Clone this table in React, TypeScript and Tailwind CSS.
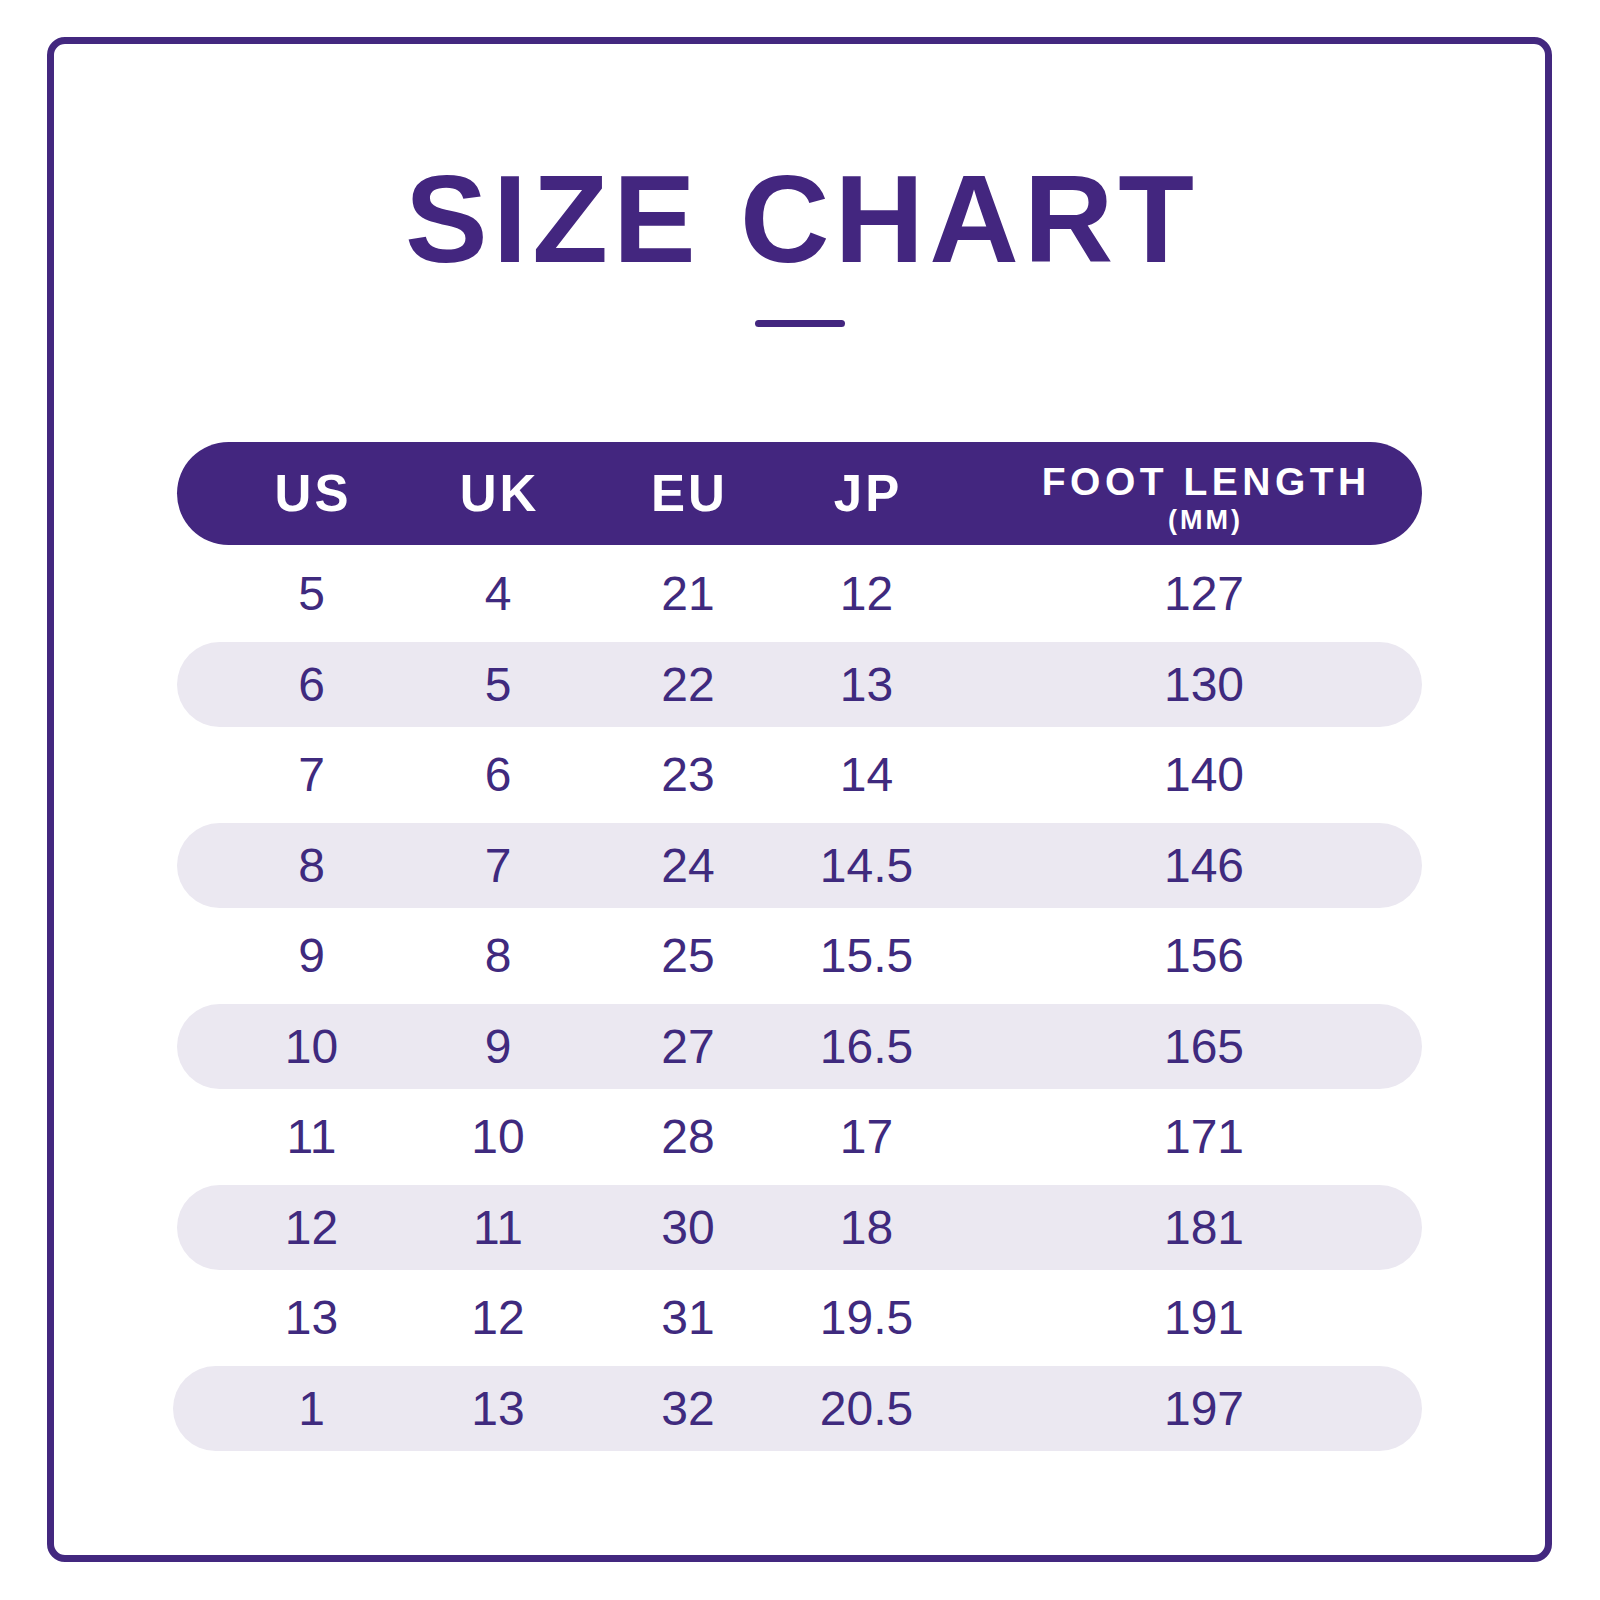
const sizes: (string | number)[][] = [
  [5, 4, 21, 12, 127],
  [6, 5, 22, 13, 130],
  [7, 6, 23, 14, 140],
  [8, 7, 24, "14.5", 146],
  [9, 8, 25, "15.5", 156],
  [10, 9, 27, "16.5", 165],
  [11, 10, 28, 17, 171],
  [12, 11, 30, 18, 181],
  [13, 12, 31, "19.5", 191],
  [1, 13, 32, "20.5", 197],
];

const grid = "grid grid-cols-[185px_188px_192px_165px_1fr] items-center pl-[42px]";

const App = () => {
  return (
    <div className="w-[1600px] h-[1600px] bg-white pt-[37px] pl-[47px] font-['Liberation_Sans',Arial,sans-serif]">
      <div className="w-[1505px] h-[1525px] border-[7px] border-[#43287f] rounded-[18px] flex flex-col items-center pt-[113px]">
        {/* Title */}
        <h1 className="text-[124px] leading-none font-bold tracking-[5px] mr-[-5px] text-[#43267f]">SIZE CHART</h1>
        <div className="mt-[39px] w-[90px] h-[7px] rounded-full bg-[#43267f]" />

        {/* Table */}
        <div className="mt-[115px] w-[1245px] flex flex-col gap-[5.5px]">
          <div className={`${grid} h-[103px] rounded-full bg-[#43267f] text-white font-bold`}>
            <div className="text-center text-[51px] leading-none tracking-[3px] mr-[-3px]">US</div>
            <div className="text-center text-[51px] leading-none tracking-[3px] mr-[-3px]">UK</div>
            <div className="text-center text-[51px] leading-none tracking-[3px] mr-[-3px]">EU</div>
            <div className="text-center text-[51px] leading-none tracking-[3px] mr-[-3px]">JP</div>
            <div className="pl-[37px] mt-[9px] flex flex-col items-center">
              <span className="text-[39px] leading-none tracking-[4.5px] mr-[-4.5px]">FOOT LENGTH</span>
              <span className="mt-[6px] text-[27px] leading-none tracking-[3px] mr-[-3px]">(MM)</span>
            </div>
          </div>

          {sizes.map((row, i) => (
            <div
              key={i}
              className={`${grid} h-[85px] rounded-full text-[48px] leading-none text-[#3f2a7e] ${
                i % 2 === 1 ? "bg-[#ebe8f1]" : ""
              } ${i === 0 ? "mt-[1px]" : ""} ${i === sizes.length - 1 ? "-ml-[4px] pl-[46px]" : ""}`}
            >
              {row.map((v, j) => (
                <div key={j} className={`text-center ${j === 4 ? "pl-[37px]" : ""}`}>
                  {v}
                </div>
              ))}
            </div>
          ))}
        </div>
      </div>
    </div>
  );
};

export default App;
